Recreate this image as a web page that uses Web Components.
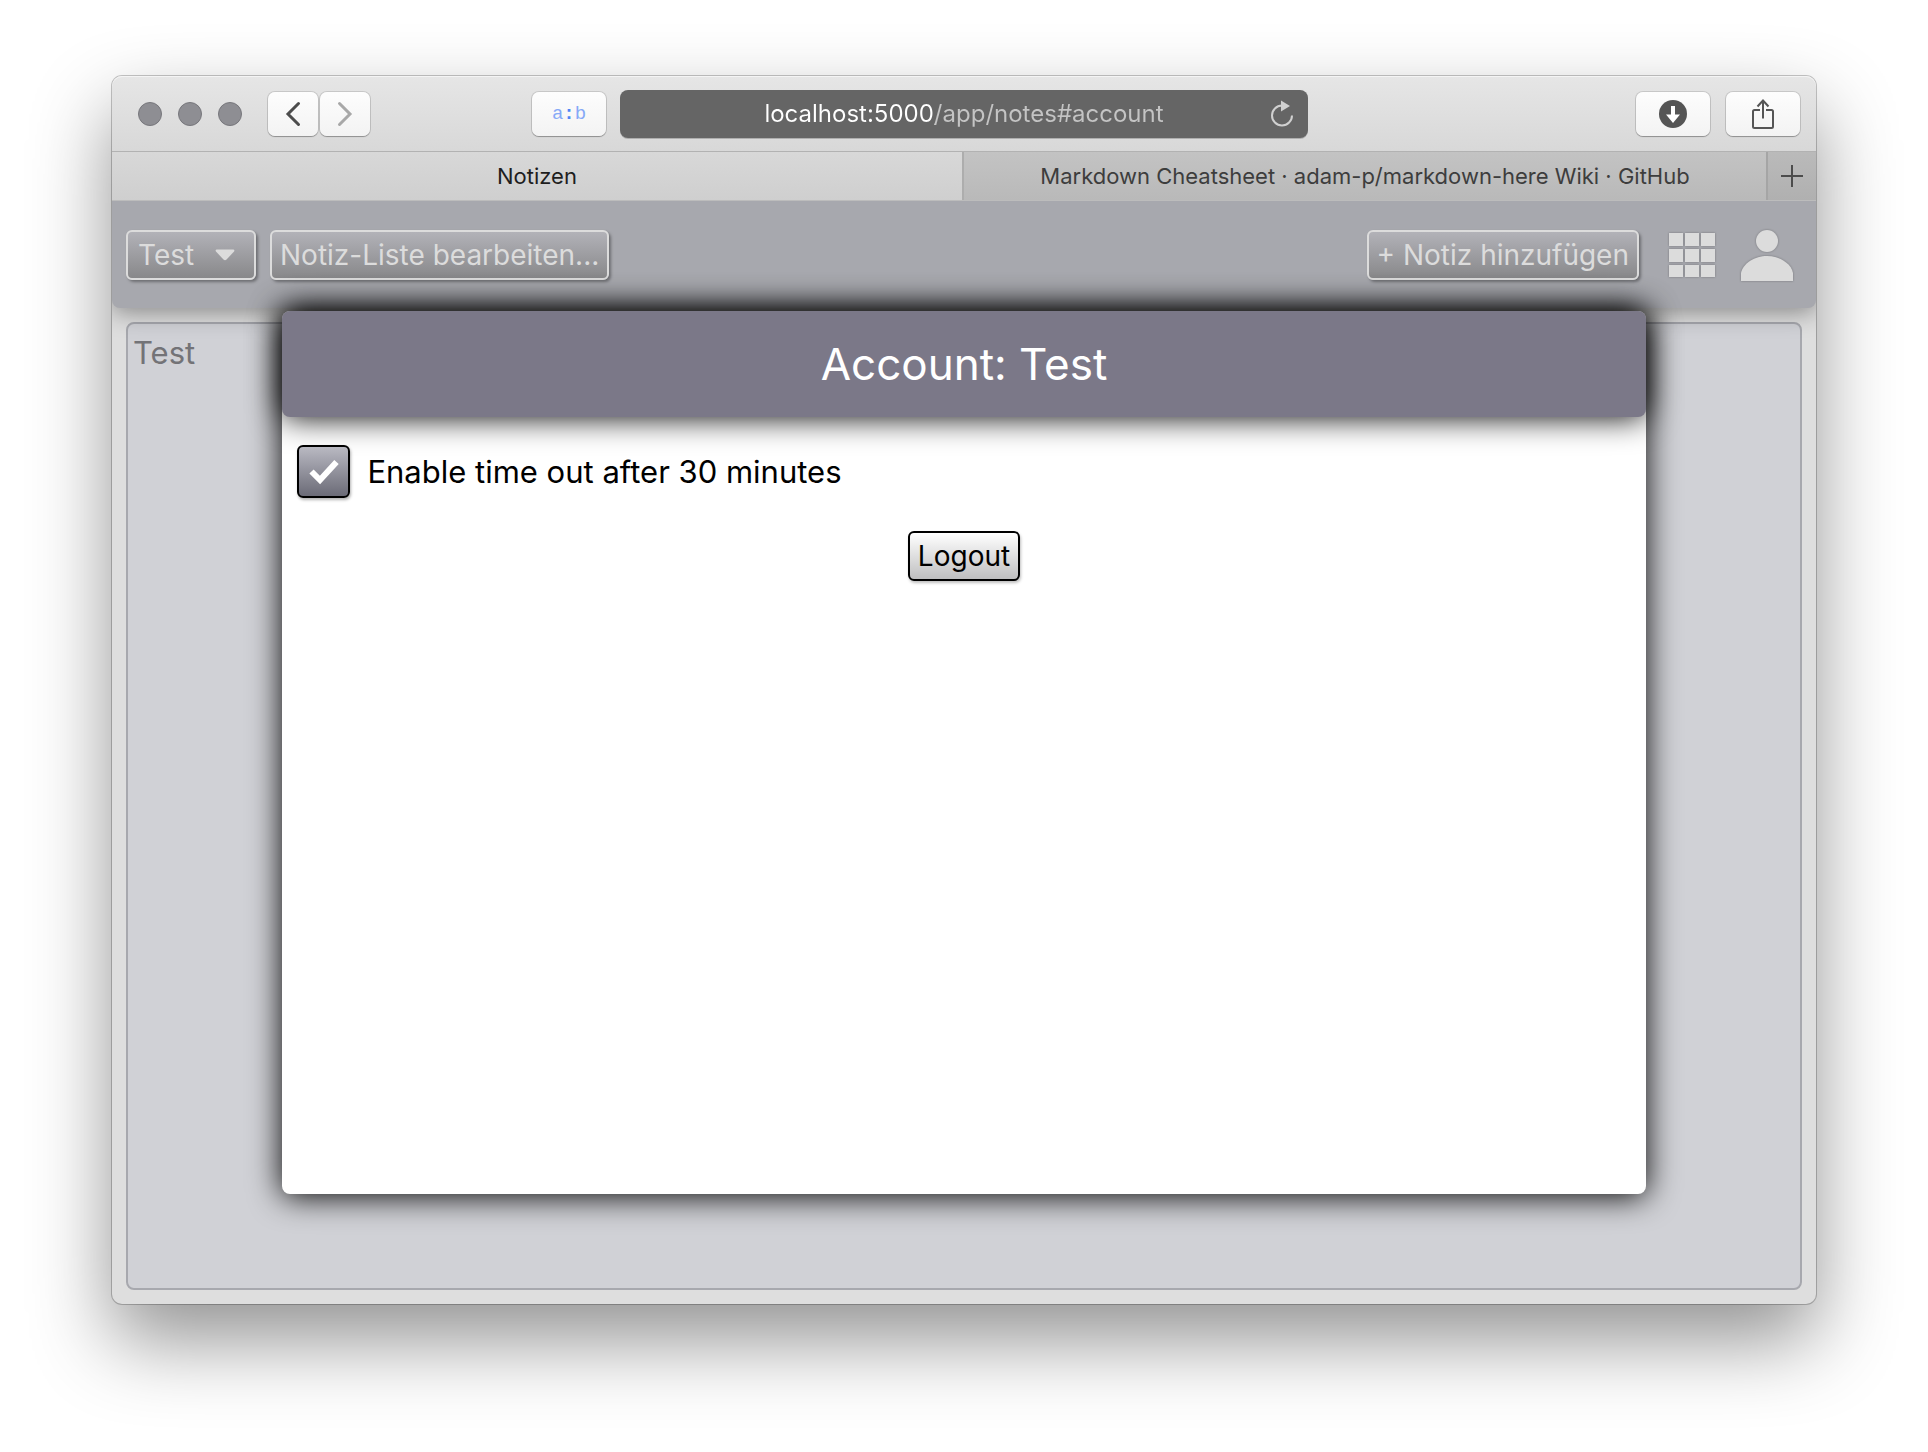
<!DOCTYPE html>
<html lang="de">
<head>
<meta charset="utf-8">
<title>Notizen</title>
<style>
  html { height: 100%; }
  body {
    margin: 0;
    min-height: 100%;
    box-sizing: border-box;
    padding: 76px 112px 148px;
    display: flex;
    background: #fff;
    font-family: Inter, "Liberation Sans", sans-serif;
  }
</style>
</head>
<body>
<browser-window>
  <browser-toolbar slot="toolbar"></browser-toolbar>
  <browser-tabs slot="tabs"></browser-tabs>
  <notes-app></notes-app>
</browser-window>

<script>
const define = (name, html) => {
  const template = document.createElement('template');
  template.innerHTML = `<style>:host,*{box-sizing:border-box}button,input,select{font:inherit;margin:0;padding:0;border:0}svg{display:block}</style>${html}`;
  customElements.define(name, class extends HTMLElement {
    constructor() {
      super();
      this.attachShadow({ mode: 'open' }).append(template.content.cloneNode(true));
    }
  });
};

define('browser-window', `
<style>
  :host {
    flex: 1; min-width: 0; display: flex; flex-direction: column;
    border-radius: 10px; background: #dedede;
    box-shadow: 0 0 0 1px rgba(0,0,0,.22), 0 36px 80px rgba(0,0,0,.43);
  }
  ::slotted(notes-app) { flex: 1; }
</style>
<slot name="toolbar"></slot><slot name="tabs"></slot><slot></slot>`);

define('tool-button', `
<style>
  :host { display: block; width: 74px; height: 44px; }
  :host([narrow]) { width: 50px; }
  button {
    width: 100%; height: 100%; display: flex; align-items: center; justify-content: center;
    border-radius: 7px; background: linear-gradient(#fdfdfd, #f3f3f3); color: #555;
    box-shadow: 0 0 0 1px rgba(0,0,0,.12), 0 1px 1px rgba(0,0,0,.25);
  }
</style>
<button type="button"><slot></slot></button>`);

define('browser-toolbar', `
<style>
  :host {
    display: grid; grid-template-columns: 1fr minmax(0, 688px) 1fr; gap: 14px; align-items: center;
    height: 76px; padding: 0 16px; border-bottom: 1px solid #b2b2b2;
    border-radius: 10px 10px 0 0; background: linear-gradient(#e6e6e6, #d8d8d8);
    box-shadow: inset 0 1px #f4f4f4;
  }
  .left, .right, .lights, .nav { display: flex; align-items: center; }
  .left { justify-content: space-between; padding-left: 10px; }
  .right { justify-content: flex-end; gap: 16px; }
  .start { display: flex; align-items: center; gap: 26px; }
  .lights { gap: 16px; }
  .lights i { width: 24px; height: 24px; border-radius: 50%; background: #8e8e93; border: 1px solid #77777c; }
  .nav { gap: 2px; }
  .ab { font: 19px "Liberation Mono", monospace; color: #86a9f7; }
  .ab b { color: #4f86f5; }
  .address { display: grid; align-items: center; height: 48px; border-radius: 8px; background: #656565; box-shadow: 0 1px rgba(0,0,0,.2); }
  .address > * { grid-area: 1 / 1; }
  input {
    width: 100%; height: 48px; outline: 0; text-align: center; font-size: 24px; color: #fff;
    background: linear-gradient(90deg, #fff calc(50% - 29px), #c4c4c4 calc(50% - 29px));
    -webkit-background-clip: text; background-clip: text; -webkit-text-fill-color: transparent;
  }
  .reload { justify-self: end; margin-right: 14px; background: none; color: #d0d0d0; z-index: 1; }
</style>
<div class="left">
  <div class="start">
    <div class="lights"><i></i><i></i><i></i></div>
    <div class="nav">
      <tool-button narrow><svg width="16" height="26" viewBox="0 0 16 26" fill="none" stroke="#4c4c4c" stroke-width="3" stroke-linecap="round"><path d="M13.500 2.500 3 13l10.500 10.500"/></svg></tool-button>
      <tool-button narrow><svg width="16" height="26" viewBox="0 0 16 26" fill="none" stroke="#a8a8a8" stroke-width="3" stroke-linecap="round"><path d="M2.500 2.500 13 13 2.500 23.500"/></svg></tool-button>
    </div>
  </div>
  <tool-button><span class="ab">a<b>:</b>b</span></tool-button>
</div>
<div class="address">
  <input type="text" aria-label="Adresse" value="localhost:5000/app/notes#account">
  <button class="reload" type="button" aria-label="Neu laden"><svg width="24" height="28" viewBox="0 0 24 28"><path d="M22 15.500a10 10 0 1 1-10-10" fill="none" stroke="currentColor" stroke-width="2"/><path d="M11 .5 20 6l-9 5.500z" fill="currentColor"/></svg></button>
</div>
<div class="right">
  <tool-button><svg width="28" height="28" viewBox="0 0 28 28"><circle cx="14" cy="14" r="14" fill="#555"/><path d="M12 6h4v8.500h5L14 23 7 14.500h5z" fill="#fff"/></svg></tool-button>
  <tool-button><svg width="24" height="32" viewBox="0 0 24 32" fill="none" stroke="#555" stroke-width="2"><path d="M9 12H3.500Q2 12 2 13.500v15Q2 30 3.500 30h17q1.500 0 1.500-1.500v-15Q22 12 20.500 12H15M12 20.500V3M6.500 8.500 12 2.500l5.500 6"/></svg></tool-button>
</div>`);

define('browser-tabs', `
<style>
  :host { display: flex; height: 49px; border-bottom: 1px solid #bcbcbc; font-size: 22px; }
  a { display: flex; align-items: center; justify-content: center; min-width: 0; text-decoration: none; color: #3d3d3d; background: linear-gradient(#c3c3c3, #b9b9b9); white-space: nowrap; }
  a.on { flex: 851; color: #1e1e1e; background: linear-gradient(#d8d8d8, #cfcfcf); }
  a.off { flex: 803; border-left: 2px solid #adadad; }
  button { width: 50px; border-left: 2px solid #a5a5a5; background: linear-gradient(#bababa, #b0b0b0); display: grid; place-items: center; color: #4c4c4c; }
</style>
<a class="on" href="#notizen">Notizen</a>
<a class="off" href="#cheatsheet">Markdown Cheatsheet · adam-p/markdown-here Wiki · GitHub</a>
<button type="button" aria-label="Neuer Tab"><svg width="22" height="22" viewBox="0 0 22 22" stroke="currentColor" stroke-width="2"><path d="M11 0v22M0 11h22"/></svg></button>`);

define('app-button', `
<style>
  :host { display: block; --edge: #dcdcdc; --top: #b2b2b8; --bottom: #88888a; color: #dcdcdc; }
  :host([light]) { --edge: #000; --top: #fff; --bottom: #bfbfc0; color: #000; }
  button {
    height: 50px; padding: 0 8px; border: 2px solid var(--edge); border-radius: 6px; color: inherit;
    font-size: 28px; white-space: nowrap; background: linear-gradient(var(--top), var(--bottom));
    box-shadow: 2px 2px 3px rgba(0,0,0,.35);
  }
  :host([light]) button { box-shadow: 1px 2px 3px rgba(0,0,0,.25); }
</style>
<button type="button"><slot></slot></button>`);

define('list-select', `
<style>
  :host { display: grid; align-items: center; width: 130px; color: #dcdcdc; }
  select, svg { grid-area: 1 / 1; }
  select {
    appearance: none; width: 100%; height: 50px; padding: 0 10px; border: 2px solid #dcdcdc; border-radius: 6px;
    color: inherit; font-size: 28px; background: linear-gradient(#b2b2b8, #88888a);
    box-shadow: 2px 2px 3px rgba(0,0,0,.35);
  }
  svg { justify-self: end; margin-right: 21px; pointer-events: none; z-index: 1; }
</style>
<select aria-label="Notiz-Liste"><option>Test</option></select>
<svg width="20" height="12" viewBox="0 0 20 12"><path d="M1.500.5h17q1.500.5.5 2l-7.500 8q-1.500 1.500-3 0L1 2.500Q0 1 1.500.5z" fill="#dcdcdc"/></svg>`);

define('app-header', `
<style>
  :host {
    display: flex; align-items: center; gap: 14px; height: 107px; padding: 0 22px 0 14px;
    border-radius: 0 0 8px 8px; background: #a7a8ae; box-shadow: 0 4px 24px rgba(0,0,0,.4);
    clip-path: inset(0 0 -40px 0);
  }
  .space { flex: 1; }
  .icon { background: none; color: #dcdcdc; filter: drop-shadow(0 0 1px rgba(0,0,0,.3)); }
  .grid { margin: 0 10px 0 15px; }
</style>
<list-select></list-select>
<app-button>Notiz-Liste bearbeiten...</app-button>
<span class="space"></span>
<app-button>+ Notiz hinzufügen</app-button>
<button class="icon grid" type="button" aria-label="Übersicht"><svg width="48" height="46" viewBox="0 0 48 46" fill="currentColor"><path d="M1 1h14v13H1zm16 0h14v13H17zm16 0h14v13H33zM1 17h14v13H1zm16 0h14v13H17zm16 0h14v13H33zM1 33h14v12H1zm16 0h14v12H17zm16 0h14v12H33z"/></svg></button>
<button class="icon" type="button" aria-label="Account"><svg width="54" height="52" viewBox="0 0 54 52" fill="currentColor"><circle cx="27" cy="12" r="11"/><path d="M1 52v-8C3 34 15 27 27 27s24 7 26 17v8z"/></svg></button>`);

define('note-card', `
<style>
  :host { display: block; flex: 1; margin: 14px; padding: 10px 5px; border: 2px solid #a7a8ae; border-radius: 8px; background: #d0d1d6; color: #737377; font-size: 31px; line-height: 38px; }
</style>
<slot></slot>`);

define('account-dialog', `
<style>
  :host {
    display: block; border-radius: 8px; background: #fff;
    color: #000; font-size: 31px; box-shadow: 0 2px 32px #000;
  }
  h1 {
    margin: 0; height: 106px; display: flex; align-items: center; justify-content: center;
    border-radius: 8px; background: #7b7888; color: #fff; font-size: 44px; font-weight: 400;
    box-shadow: 0 0 32px #000;
  }
  form { padding: 28px 15px; display: flex; flex-direction: column; gap: 33px; }
  label { display: flex; align-items: center; gap: 17px; line-height: 53px; }
  .box { display: grid; place-items: center; width: 53px; height: 53px; border-radius: 6px; box-shadow: 1px 2px 3px rgba(0,0,0,.3); }
  .box > * { grid-area: 1 / 1; }
  input { appearance: none; width: 53px; height: 53px; border: 2px solid #000; border-radius: 6px; background: linear-gradient(#b9b9c2, #6b6b77); }
  svg { z-index: 1; pointer-events: none; }
  input:not(:checked) + svg { display: none; }
  app-button { align-self: center; }
</style>
<h1>Account: Test</h1>
<form>
  <label for="timeout"><span class="box"><input id="timeout" type="checkbox" checked><svg width="30" height="26" viewBox="0 0 30 26" fill="none" stroke="#fff" stroke-width="6"><path d="M2.500 12.500 11 21 27.500 3"/></svg></span>Enable time out after 30 minutes</label>
  <app-button light>Logout</app-button>
</form>`);

define('notes-app', `
<style>
  :host { position: relative; display: flex; flex-direction: column; }
  /* percentages of the app area keep the dialog centred */
  account-dialog { position: absolute; inset: 10%; }
</style>
<app-header></app-header>
<note-card>Test</note-card>
<account-dialog role="dialog" aria-label="Account"></account-dialog>`);
</script>
</body>
</html>
